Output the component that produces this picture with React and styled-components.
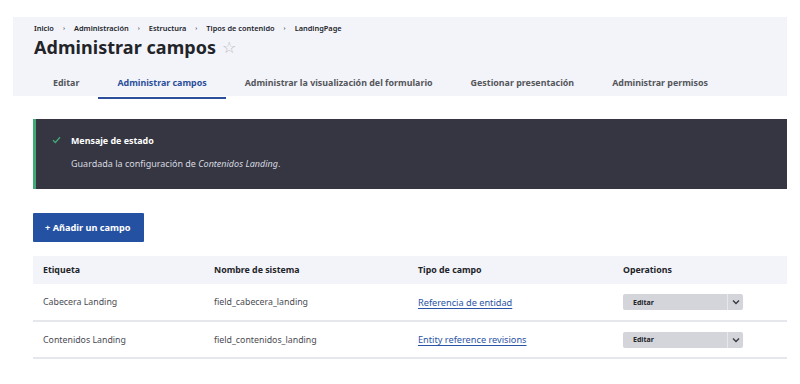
import React from "react";
import styled, { createGlobalStyle } from "styled-components";

const Global = createGlobalStyle`
  html, body { margin: 0; padding: 0; background: #fff; }
  body { font-family: "Noto Sans", "Open Sans", sans-serif; color: #232429; }
  * { box-sizing: border-box; }
`;

const Page = styled.div`
  width: 800px;
  height: 384px;
  padding-top: 17px;
  overflow: hidden;
`;

const Header = styled.header`
  margin: 0 13px;
  background: #f3f4f9;
  height: 79px;
  padding: 6px 0 0 21px;
  display: flex;
  flex-direction: column;
`;

const Breadcrumb = styled.nav`
  display: flex;
  align-items: center;
  font-size: 7.4px;
  font-weight: 600;
  color: #232429;
  height: 10px;
`;

const Sep = styled.span`
  margin: 0 9px;
  font-size: 6px;
  color: #55565b;
`;

const Title = styled.h1`
  margin: 2px 0 0;
  font-size: 18px;
  font-weight: 700;
  line-height: 24px;
  letter-spacing: 0.05px;
  display: flex;
  align-items: center;
  gap: 6px;
`;

const Star = styled.span`
  font-size: 16px;
  font-weight: 400;
  color: #b8b8c0;
  line-height: 1;
`;

const Tabs = styled.div`
  display: flex;
  margin-top: 12px;
`;

const Tab = styled.a`
  display: block;
  padding: 0 19px;
  height: 28px;
  line-height: 24px;
  font-size: 8.9px;
  font-weight: 700;
  color: ${(p) => (p.$active ? "#2b4f9a" : "#55565b")};
  border-bottom: 2px solid ${(p) => (p.$active ? "#2b4f9a" : "transparent")};
  text-decoration: none;
  white-space: nowrap;
`;

const Main = styled.main`
  padding: 23px 13px 0 33px;
`;

const Message = styled.div`
  background: #353641;
  border-left: 3px solid #42a877;
  height: 70px;
  padding: 14px 0 0 16px;
  display: grid;
  grid-template-columns: 19px 1fr;
  grid-template-rows: 14px 23px;
  align-items: center;
`;

const MsgTitle = styled.div`
  color: #fff;
  font-size: 8.9px;
  font-weight: 700;
`;

const MsgText = styled.div`
  grid-column: 2;
  color: #d8d9e0;
  font-size: 9px;
  align-self: end;
  em { font-style: italic; }
`;

const Button = styled.button`
  margin-top: 24px;
  height: 29px;
  padding: 0 13px 0 12px;
  background: #2551a3;
  border: none;
  border-radius: 1px;
  color: #fff;
  font-family: inherit;
  font-size: 9.2px;
  font-weight: 700;
  display: block;
`;

const Table = styled.table`
  margin-top: 14px;
  width: 754px;
  border-collapse: collapse;
  table-layout: fixed;
`;

const Th = styled.th`
  background: #f3f4f9;
  height: 28px;
  text-align: left;
  font-size: 8.8px;
  font-weight: 700;
  padding: 0 0 0 10px;
  color: #232429;
  width: ${(p) => p.$w || "auto"};
`;

const Tr = styled.tr`
  border-bottom: 2px solid #e6e7ec;
`;

const Td = styled.td`
  height: 37px;
  padding: 0 0 0 10px;
  font-size: 8.8px;
  color: #4a4b52;
`;

const Link = styled.a`
  color: #2b54a6;
  font-size: 9.2px;
  text-decoration: underline;
  text-underline-offset: 1.5px;
`;

const Drop = styled.div`
  width: 120px;
  height: 16px;
  background: #d4d5da;
  border-radius: 2px;
  display: flex;
  align-items: center;
`;

const DropMain = styled.span`
  flex: 1;
  padding-left: 10px;
  font-size: 7px;
  font-weight: 700;
  color: #232429;
`;

const DropToggle = styled.span`
  width: 16px;
  height: 16px;
  border-left: 1px solid #e8e8ec;
  display: flex;
  align-items: center;
  justify-content: center;
`;

const Chevron = () => (
  <svg width="8" height="6" viewBox="0 0 8 6">
    <path d="M1 1.5 L4 4.5 L7 1.5" fill="none" stroke="#3a3b42" strokeWidth="1.4" />
  </svg>
);

const Check = () => (
  <svg width="9" height="8" viewBox="0 0 9 8">
    <path d="M1 4.2 L3.4 6.5 L8 1.2" fill="none" stroke="#42a877" strokeWidth="1.3" />
  </svg>
);

const rows = [
  ["Cabecera Landing", "field_cabecera_landing", "Referencia de entidad"],
  ["Contenidos Landing", "field_contenidos_landing", "Entity reference revisions"],
];

export default function App() {
  return (
    <>
      <Global />
      <Page>
        <Header>
          <Breadcrumb>
            <span>Inicio</span><Sep>›</Sep>
            <span>Administración</span><Sep>›</Sep>
            <span>Estructura</span><Sep>›</Sep>
            <span>Tipos de contenido</span><Sep>›</Sep>
            <span>LandingPage</span>
          </Breadcrumb>
          <Title>
            Administrar campos <Star>☆</Star>
          </Title>
          <Tabs>
            <Tab>Editar</Tab>
            <Tab $active>Administrar campos</Tab>
            <Tab>Administrar la visualización del formulario</Tab>
            <Tab>Gestionar presentación</Tab>
            <Tab>Administrar permisos</Tab>
          </Tabs>
        </Header>
        <Main>
          <Message>
            <Check />
            <MsgTitle>Mensaje de estado</MsgTitle>
            <MsgText>
              Guardada la configuración de <em>Contenidos Landing</em>.
            </MsgText>
          </Message>
          <Button>+ Añadir un campo</Button>
          <Table>
            <thead>
              <tr>
                <Th $w="171px">Etiqueta</Th>
                <Th $w="204px">Nombre de sistema</Th>
                <Th $w="205px">Tipo de campo</Th>
                <Th>Operations</Th>
              </tr>
            </thead>
            <tbody>
              {rows.map((r) => (
                <Tr key={r[1]}>
                  <Td>{r[0]}</Td>
                  <Td>{r[1]}</Td>
                  <Td><Link>{r[2]}</Link></Td>
                  <Td>
                    <Drop>
                      <DropMain>Editar</DropMain>
                      <DropToggle><Chevron /></DropToggle>
                    </Drop>
                  </Td>
                </Tr>
              ))}
            </tbody>
          </Table>
        </Main>
      </Page>
    </>
  );
}
